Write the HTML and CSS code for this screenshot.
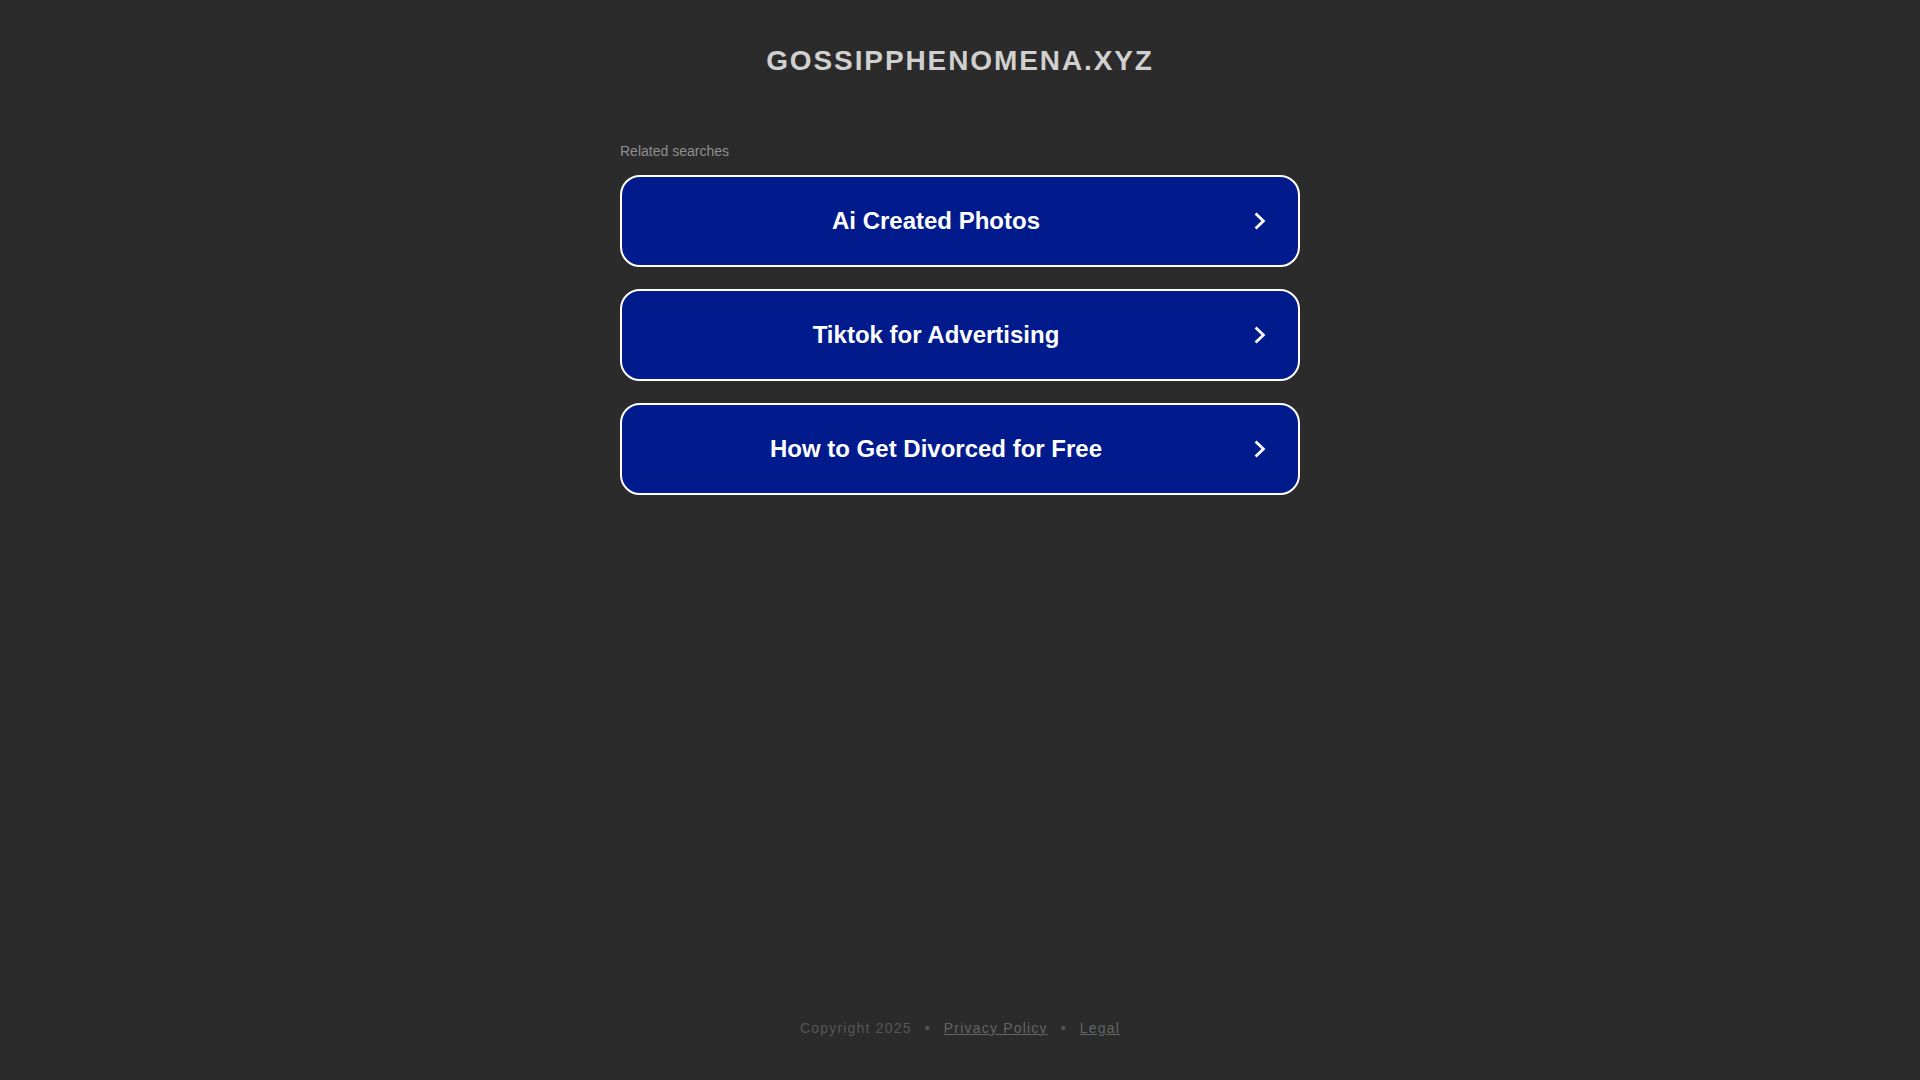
FILE: index.html
```html
<!DOCTYPE html>
<html lang="en">
<head>
<meta charset="utf-8">
<title>gossipphenomena.xyz</title>
<link rel="stylesheet" href="styles.css">
</head>
<body>
<div class="page">
  <header class="header">
    <h1 class="domain">GOSSIPPHENOMENA.XYZ</h1>
  </header>
  <main class="main">
    <div class="related">Related searches</div>
    <ul class="links">
      <li><a class="link" href="#"><span class="link-text">Ai Created Photos</span><svg class="chev" width="12" height="18" viewBox="0 0 12 18"><path d="M1.6 1.4 L9.4 9 L1.6 16.6" fill="none" stroke="#ffffff" stroke-width="2.8"/></svg></a></li>
      <li><a class="link" href="#"><span class="link-text">Tiktok for Advertising</span><svg class="chev" width="12" height="18" viewBox="0 0 12 18"><path d="M1.6 1.4 L9.4 9 L1.6 16.6" fill="none" stroke="#ffffff" stroke-width="2.8"/></svg></a></li>
      <li><a class="link" href="#"><span class="link-text">How to Get Divorced for Free</span><svg class="chev" width="12" height="18" viewBox="0 0 12 18"><path d="M1.6 1.4 L9.4 9 L1.6 16.6" fill="none" stroke="#ffffff" stroke-width="2.8"/></svg></a></li>
    </ul>
  </main>
  <footer class="footer">
    <span class="copy">Copyright 2025</span>
    <span class="sep">•</span>
    <a class="flink" href="#">Privacy Policy</a>
    <span class="sep">•</span>
    <a class="flink" href="#">Legal</a>
  </footer>
</div>
</body>
</html>
```

FILE: styles.css
```css
html, body {
  margin: 0;
  padding: 0;
  background: #2b2b2b;
}
body {
  font-family: "Liberation Sans", Arial, sans-serif;
}
.page {
  min-height: 100vh;
  display: flex;
  flex-direction: column;
  align-items: center;
}
.header {
  padding-top: 45px;
  text-align: center;
}
.domain {
  margin: 0;
  font-size: 28px;
  line-height: 32px;
  font-weight: 700;
  letter-spacing: 1.9px;
  color: #d0d0d0;
}
.main {
  width: 680px;
  padding-top: 66px;
}
.related {
  font-size: 14px;
  line-height: 16px;
  color: #8f8f8f;
  margin-bottom: 16px;
}
.links {
  list-style: none;
  margin: 0;
  padding: 0;
  display: flex;
  flex-direction: column;
  gap: 22px;
}
.link {
  display: flex;
  align-items: center;
  height: 88px;
  border: 2px solid #ffffff;
  border-radius: 20px;
  background: #011b8c;
  text-decoration: none;
  color: #ffffff;
}
.link-text {
  flex: 1;
  text-align: center;
  font-size: 24px;
  font-weight: 700;
  line-height: 28px;
}
.chev {
  display: block;
  margin-left: 4px;
  margin-right: 32px;
}
.footer {
  margin-top: auto;
  padding-bottom: 44px;
  display: flex;
  align-items: center;
  font-size: 14px;
  line-height: 16px;
  letter-spacing: 1.2px;
  color: #575757;
}
.sep {
  margin: 0 13px;
  color: #575757;
}
.flink {
  color: #646464;
  text-decoration: underline;
}
```
